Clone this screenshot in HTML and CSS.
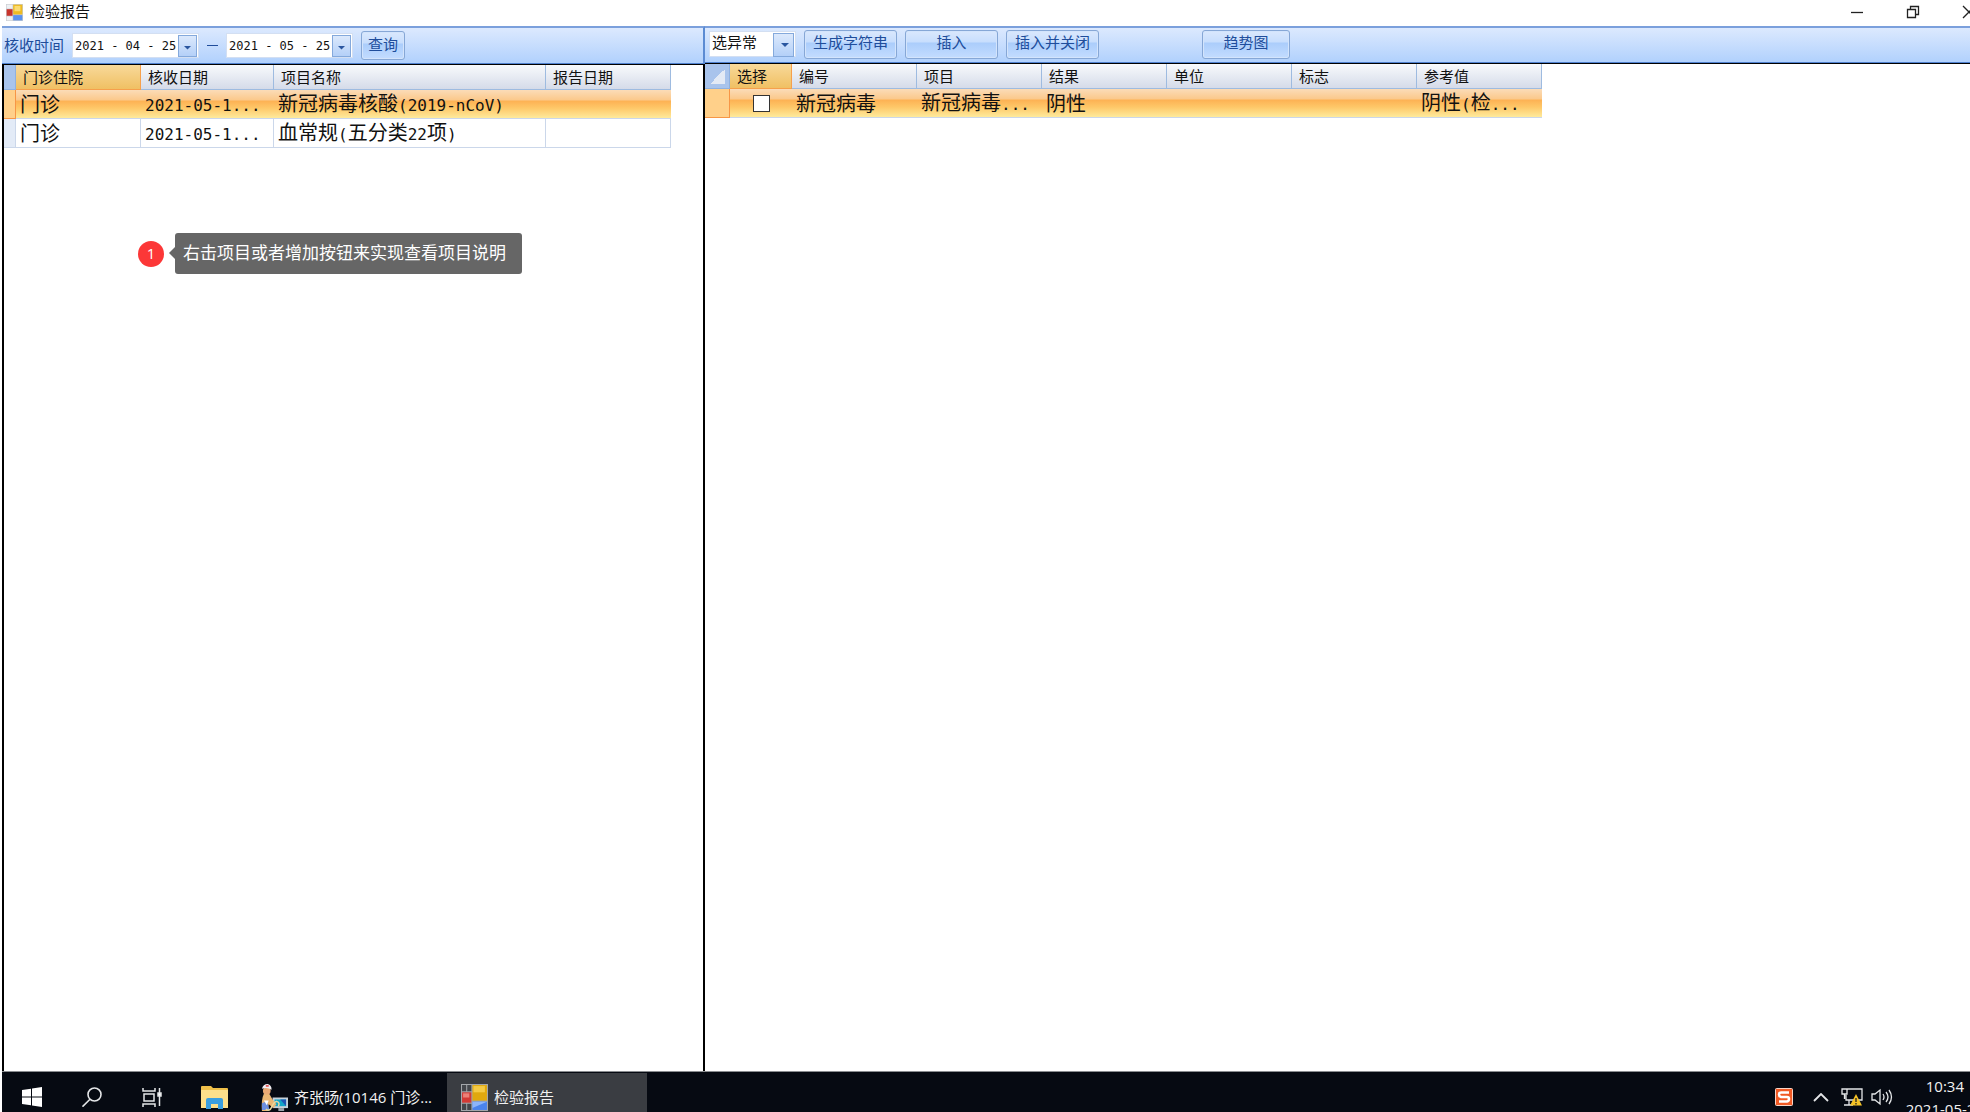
FILE: index.html
```html
<!DOCTYPE html>
<html lang="zh-CN">
<head>
  <meta charset="UTF-8">
  <meta name="viewport" content="width=device-width, initial-scale=1.0">
  <title>检验报告</title>
  <link rel="stylesheet" href="styles.css">
</head>
<body>
  <!-- Title bar -->
  <header class="titlebar">
    <svg class="app-icon" viewBox="0 0 26 26">
      <rect width="26" height="26" fill="#c9ccd2"/>
      <rect x="1" y="1" width="9" height="6" fill="#eef0f3"/>
      <rect x="1" y="19" width="9" height="6" fill="#eef0f3"/>
      <rect x="1" y="8" width="9" height="10" fill="#c8342c"/>
      <rect x="11" y="1" width="14" height="15" fill="#eebb22"/>
      <rect x="13" y="3" width="9" height="8" fill="#fbdc72"/>
      <rect x="11" y="17" width="14" height="8" fill="#5b92ee"/>
    </svg>
    <h1>检验报告</h1>
    <div class="win-buttons">
      <button aria-label="最小化"><svg viewBox="0 0 14 14"><path d="M1 7.500h12"/></svg></button>
      <button aria-label="还原"><svg viewBox="0 0 14 14"><path d="M1.500 4.500h8v8h-8zM4.500 4v-2.500h8v8h-3"/></svg></button>
      <button aria-label="关闭"><svg viewBox="0 0 14 14"><path d="M1 1l12 12M13 1L1 13"/></svg></button>
    </div>
  </header>

  <main>
    <!-- Report list -->
    <section class="pane left">
      <form class="toolbar">
        <label for="from">核收时间</label>
        <div class="date">
          <input id="from" type="text" value="2021 - 04 - 25">
          <button type="button" class="drop" aria-label="选择开始日期"></button>
        </div>
        <span class="dash"></span>
        <div class="date">
          <input type="text" value="2021 - 05 - 25" aria-label="结束日期">
          <button type="button" class="drop" aria-label="选择结束日期"></button>
        </div>
        <button type="button" class="btn query">查询</button>
      </form>
      <div class="content">
        <table class="list">
          <colgroup><col class="c-row"><col class="c-std"><col class="c-date"><col class="c-name"><col class="c-std"></colgroup>
          <thead>
            <tr><th class="corner"></th><th class="sorted">门诊住院</th><th>核收日期</th><th>项目名称</th><th>报告日期</th></tr>
          </thead>
          <tbody>
            <tr class="selected">
              <td class="rowhead"></td><td>门诊</td><td><span class="en">2021-05-1...</span></td><td>新冠病毒核酸<span class="en">(2019-nCoV)</span></td><td></td>
            </tr>
            <tr>
              <td class="rowhead"></td><td>门诊</td><td><span class="en">2021-05-1...</span></td><td>血常规<span class="en">(</span>五分类<span class="en">22</span>项<span class="en">)</span></td><td></td>
            </tr>
          </tbody>
        </table>

        <!-- Note marker -->
        <div class="note">
          <span class="marker">1</span>
          <p class="bubble">右击项目或者增加按钮来实现查看项目说明</p>
        </div>
      </div>
    </section>

    <!-- Result details -->
    <section class="pane right">
      <form class="toolbar">
        <div class="picker">
          <select aria-label="选择方式">
            <option>选异常</option>
          </select>
        </div>
        <button type="button" class="btn">生成字符串</button>
        <button type="button" class="btn">插入</button>
        <button type="button" class="btn">插入并关闭</button>
        <button type="button" class="btn trend">趋势图</button>
      </form>
      <div class="content">
        <table class="detail">
          <colgroup><col class="c-corner"><col class="c-check"><col class="c-std"><col class="c-std"><col class="c-std"><col class="c-std"><col class="c-std"><col class="c-std"></colgroup>
          <thead>
            <tr><th class="corner"></th><th class="sorted">选择</th><th>编号</th><th>项目</th><th>结果</th><th>单位</th><th>标志</th><th>参考值</th></tr>
          </thead>
          <tbody>
            <tr class="selected">
              <td class="rowhead"></td><td class="check"><input type="checkbox" aria-label="选择 新冠病毒"></td><td>新冠病毒</td><td>新冠病毒<span class="en">...</span></td><td>阴性</td><td></td><td></td><td>阴性<span class="en">(</span>检<span class="en">...</span></td>
            </tr>
          </tbody>
        </table>
      </div>
    </section>
  </main>

  <!-- Taskbar -->
  <footer class="taskbar">
    <button class="sys" aria-label="开始">
      <svg viewBox="0 0 20 20" fill="#fff"><path d="M0 3l9-1.200v7.700H0zM10 1.600L20 0v9.500H10zM0 10.500h9v7.700L0 17zM10 10.500h10V20l-10-1.600z"/></svg>
    </button>
    <button class="sys" aria-label="搜索">
      <svg viewBox="0 0 20 20" fill="none" stroke="#e4e6e8" stroke-width="1.600"><circle cx="12.500" cy="7.500" r="6.500"/><path d="M8 12.200L.5 19.700"/></svg>
    </button>
    <button class="sys" aria-label="任务视图">
      <svg viewBox="0 0 20 20" fill="none" stroke="#e4e6e8" stroke-width="1.500"><path d="M1 1v3h12V1M2 7h10v7H2zM1 20v-3h12v3M17.500 1v18"/><path d="M16 6h3v3h-3z" fill="#fff"/></svg>
    </button>
    <button class="sys explorer" aria-label="文件资源管理器">
      <svg viewBox="0 0 27 23"><path d="M0 1q0-1 1-1h9l2 2h14q1 0 1 1v19H0z" fill="#efc04a"/><path d="M0 4h27v18H0z" fill="#fde08b"/><path d="M5 23v-9q0-2 2-2h13q2 0 2 2v9h-5v-5h-7v5z" fill="#3a9fe0"/></svg>
    </button>
    <button class="task">
      <svg viewBox="0 0 28 28">
        <path d="M12 14h16v11H12z" fill="#c7d2da"/><path d="M14 16h12v7H14z" fill="#12a5c8"/><path d="M20 16h6v7z" fill="#1f55b5"/><path d="M18 25h6v3h-6z" fill="#9aa4ac"/>
        <path d="M3 10q4-3 6 1l3 5 4 5-3 4-5-4-1 7H1q-1-12 2-18z" fill="#eab673"/><path d="M1 20l5-2 3 9H1z" fill="#6d8fe0"/><path d="M3 17l3 5 2-5" fill="#fff"/>
        <circle cx="6" cy="7" r="4" fill="#e8a873"/><path d="M1 5q1-5 6-5 4 1 4 6-5-3-10-1z" fill="#f1eff4"/><path d="M5 2h3" stroke="#d33" stroke-width="1.500"/>
        <path d="M5 26q4 3 6-2t5-6q4 1 2 5" fill="none" stroke="#e8d9a0" stroke-width="1.500"/>
      </svg>
      <span>齐张旸(10146 门诊...</span>
    </button>
    <button class="task active">
      <svg viewBox="0 0 26 26">
        <rect width="26" height="26" fill="#a3a6aa"/>
        <path d="M1 1h4v6H1zM6 1h4v6H6zM1 19h4v6H1zM6 19h4v6H6z" fill="#43464b"/>
        <rect x="1" y="8" width="9" height="10" fill="#d23a35"/><rect x="2" y="9" width="6" height="4" fill="#ec8178"/>
        <rect x="11" y="1" width="14" height="15" fill="#e0a80e"/><rect x="12" y="2" width="11" height="6" fill="#f4ca45"/>
        <rect x="11" y="17" width="14" height="8" fill="#4a83ec"/><path d="M11 17h14l-14 6z" fill="#8db5fa"/>
      </svg>
      <span>检验报告</span>
    </button>

    <div class="tray">
      <svg class="sogou" viewBox="0 0 18 18"><rect x=".5" y=".5" width="17" height="17" rx="1" fill="#f15a24" stroke="#f8d5c7"/><path d="M14 4.500H6q-2 0-2 2T6 9h6q2 0 2 2t-2 2.500H4" fill="none" stroke="#fff" stroke-width="2.500"/></svg>
      <svg class="up" viewBox="0 0 16 9" fill="none" stroke="#e4e6e8" stroke-width="1.800"><path d="M1 8l7-7 7 7"/></svg>
      <svg class="net" viewBox="0 0 22 18" fill="none" stroke="#e4e6e8" stroke-width="1.300"><path d="M6 1h15v11H5V7M3 17h9M8 12v5M1 1h5v5H1zM3.500 6v5"/><path d="M15 6l6 11.500H9z" fill="#f6c325" stroke="none"/><path d="M15 10v4M15 15v1.500" stroke="#222"/></svg>
      <svg class="vol" viewBox="0 0 22 18" fill="none" stroke="#e4e6e8" stroke-width="1.300"><path d="M1 6h3l5-4v14l-5-4H1zM12 6q2 3 0 6M15 4q4 5 0 10M18 2q5 7 0 14"/></svg>
      <div class="clock"><span>10:34</span><span>2021-05-25</span></div>
    </div>
  </footer>
</body>
</html>
```
FILE: styles.css
```css
* {
  margin: 0;
  padding: 0;
  box-sizing: border-box;
}

body {
  display: flex;
  flex-direction: column;
  height: 100vh;
  overflow: hidden;
  background-color: #fff;
  color: #111;
  font-family: "Liberation Sans", "Noto Sans CJK SC", sans-serif;
  font-size: 15px;
  line-height: 20px;
}

button, input, select {
  font: inherit;
  color: inherit;
  border: none;
  background: none;
}

/* Title bar */
.titlebar {
  display: flex;
  align-items: center;
  height: 26px;
  padding: 0 0 2px 6px;
}

.titlebar h1 {
  margin-left: 7px;
  font-size: 15px;
  font-weight: normal;
}

.app-icon {
  width: 17px;
  height: 17px;
}

.win-buttons {
  display: flex;
  gap: 42px;
  margin-left: auto;
  margin-right: -6px;
}

.win-buttons button {
  width: 14px;
  height: 20px;
}

.win-buttons svg {
  display: block;
  width: 14px;
  height: 14px;
  fill: none;
  stroke: #222;
  stroke-width: 1.3;
}

/* Two panes */
main {
  display: flex;
  flex: 1;
  min-height: 0;
  margin-left: 2px;
}

.pane {
  display: flex;
  flex-direction: column;
}

.left {
  flex: 0 0 703px;
}

.right {
  flex: 1;
  min-width: 0;
}

.content {
  position: relative;
  flex: 1;
  border-top: 1px solid #000;
}

.left .content {
  border-left: 2px solid #000;
  border-right: 2px solid #000;
}

/* Toolbars */
.toolbar {
  display: flex;
  align-items: center;
  height: 37px;
  border-top: 2px solid #7ba0dc;
  border-bottom: 1px solid #4f81cf;
  background: linear-gradient(#dce9fe, #b1d1fd);
  color: #204d9b;
}

.left .toolbar {
  height: 38px;
  padding-left: 2px;
  border-right: 2px solid #5b8bd3;
}

.right .toolbar {
  gap: 8px;
  padding: 0 0 2px 4px;
}

.date {
  display: flex;
  align-items: center;
  width: 127px;
  height: 25px;
  margin-left: 8px;
  padding: 1px;
  border: 1px solid #d3dff2;
  background-color: #fff;
}

.date input {
  flex: 1;
  min-width: 0;
  padding-left: 1px;
  color: #111;
  font-family: "DejaVu Sans Mono", monospace;
  font-size: 12px;
}

.drop {
  width: 19px;
  height: 22px;
  border: 1px solid #84a9dc;
  background: linear-gradient(#dce9fc, #b4d0f8);
}

/* Small arrow shared by the date boxes and the list box */
.drop::before,
.picker::after {
  content: '';
  display: block;
  width: 8px;
  height: 4px;
  background-color: #2a569f;
  clip-path: polygon(0 0, 100% 0, 50% 100%);
}

.drop::before {
  margin: 4px auto 0;
}

.picker {
  position: relative;
}

.picker::before {
  content: '';
  position: absolute;
  top: 2px;
  right: 2px;
  width: 19px;
  height: 22px;
  border: 1px solid #84a9dc;
  background: linear-gradient(#dce9fc, #b4d0f8);
  pointer-events: none;
}

.picker::after {
  position: absolute;
  top: 12px;
  right: 7px;
  pointer-events: none;
}

select {
  display: block;
  appearance: none;
  width: 87px;
  height: 26px;
  padding: 0 0 2px 2px;
  border: 1px solid #d3dff2;
  background-color: #fff;
  color: #111;
}

.dash {
  width: 11px;
  height: 1px;
  margin-left: 8px;
  background-color: #204d9b;
}

.btn {
  width: 93px;
  height: 29px;
  padding-bottom: 2px;
  border: 1px solid #86a7d6;
  border-radius: 3px;
  background: linear-gradient(#dae8fd, #c8defd 40%, #abcdfb 45%, #c3dcff);
  box-shadow: inset 0 0 0 1px #d3e4fc;
}

.query {
  width: 44px;
  margin-left: 8px;
}

.trend {
  width: 88px;
  margin-left: 95px;
}

/* Grids */
table {
  table-layout: fixed;
  border-collapse: separate;
  border-spacing: 0;
}

.list { width: 667px; }
.detail { width: 837px; }
.c-row { width: 12px; }
.c-corner { width: 25px; }
.c-check { width: 62px; }
.c-std { width: 125px; }
.c-date { width: 133px; }
.c-name { width: 272px; }

th {
  height: 25px;
  padding: 1px 0 0 7px;
  border-right: 1px solid #9ebbe0;
  border-bottom: 1px solid #9ebbe0;
  background: linear-gradient(#f8fafc, #d5dbe9);
  font-weight: normal;
  text-align: left;
}

.sorted {
  border-color: #f6a04c;
  background: linear-gradient(#f8d99a, #f0c063);
}

.corner {
  border-color: #8fb1e0;
  background: #a9c4ec;
}

.detail .corner {
  background: linear-gradient(135deg, transparent 50%, #e3eaf5 50%) 5px 5px / 15px 15px no-repeat, #a9c4ec;
}

td {
  height: 29px;
  padding: 2px 0 0 4px;
  border-right: 1px solid #cbd7ea;
  border-bottom: 1px solid #cbd7ea;
  font-size: 20px;
  line-height: 24px;
  white-space: nowrap;
  overflow: hidden;
}

.en {
  font-family: "DejaVu Sans Mono", monospace;
  font-size: 16px;
}

.rowhead {
  background-color: #e3ebf7;
}

.selected td {
  border-right: none;
  background: linear-gradient(#fbdcb8, #fbc98c 35%, #fdb254 40%, #fec869 65%, #feea9c);
}

.selected .rowhead {
  border-right: 1px solid #f79646;
  border-bottom-color: #f79646;
  background: #ffd08a;
}

.selected .check {
  padding: 0;
}

.check input {
  appearance: none;
  display: block;
  width: 17px;
  height: 17px;
  margin: 0 auto;
  border: 1px solid #333;
  background-color: #fff;
}

/* Note over the list */
.note {
  position: absolute;
  top: 168px;
  left: 134px;
  display: flex;
  align-items: center;
  gap: 11px;
  color: #fff;
}

.marker {
  width: 26px;
  height: 26px;
  border-radius: 50%;
  background-color: #fc3737;
  font-family: "Open Sans", sans-serif;
  line-height: 24px;
  text-align: center;
}

.bubble {
  position: relative;
  padding: 9px 16px 8px 8px;
  border-radius: 3px;
  background-color: #666;
  font-size: 17px;
  line-height: 24px;
}

.bubble::before {
  content: '';
  position: absolute;
  top: 14px;
  left: -6px;
  border: 6px solid transparent;
  border-right-color: #666;
  border-left: none;
}

/* Taskbar, its lower edge runs off the screen */
.taskbar {
  display: flex;
  flex: 0 0 50px;
  align-items: center;
  margin: 0 0 -10px 2px;
  border-top: 1px solid #8a8d90;
  background-color: #060a12;
  color: #f1f1f1;
  font-family: "Open Sans", "Noto Sans CJK SC", sans-serif;
}

.sys {
  width: 60px;
  height: 50px;
}

.sys svg {
  display: block;
  width: 20px;
  height: 20px;
  margin: 0 auto;
}

.explorer {
  width: 65px;
}

.explorer svg {
  width: 27px;
  height: 23px;
}

.task {
  display: flex;
  align-items: center;
  gap: 6px;
  width: 200px;
  height: 48px;
  padding-left: 14px;
  white-space: nowrap;
}

.task svg {
  width: 27px;
  height: 27px;
}

.active {
  background-color: #3a3d42;
}

.tray {
  display: flex;
  align-items: center;
  margin-left: auto;
}

.sogou { width: 18px; height: 18px; margin-right: 20px; }
.up { width: 16px; height: 9px; margin-right: 12px; }
.net { width: 22px; height: 18px; margin-right: 8px; }
.vol { width: 22px; height: 18px; margin-right: 13px; }

.clock {
  display: flex;
  flex-direction: column;
  align-items: center;
  gap: 3px;
  margin-right: -14px;
}
```
